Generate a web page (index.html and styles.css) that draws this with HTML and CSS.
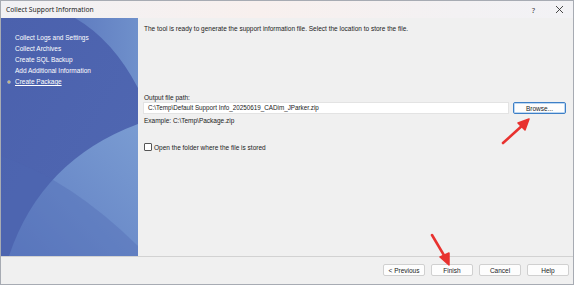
FILE: index.html
```html
<!DOCTYPE html>
<html>
<head>
<meta charset="utf-8">
<link rel="stylesheet" href="styles.css">
</head>
<body>
<div class="window">
  <div class="titlebar">
    <span class="title">Collect Support Information</span>
    <span class="tb-help">?</span>
    <span class="tb-close">
      <svg width="9" height="9" viewBox="0 0 9 9"><path d="M1 1L8 8M8 1L1 8" stroke="#333" stroke-width="0.9" fill="none"/></svg>
    </span>
  </div>
  <div class="main">
    <div class="sidebar">
      <svg class="sidebar-bg" width="137" height="238" viewBox="0 0 137 238" preserveAspectRatio="none">
        <defs>
          <linearGradient id="g1" x1="0" y1="0" x2="1" y2="1">
            <stop offset="0" stop-color="#4b61ad"/>
            <stop offset="1" stop-color="#5068b2"/>
          </linearGradient>
          <linearGradient id="g2" x1="0" y1="1" x2="1" y2="0">
            <stop offset="0" stop-color="#5f7dc2"/>
            <stop offset="1" stop-color="#7a9cd2"/>
          </linearGradient>
          <linearGradient id="g3" x1="0" y1="0" x2="1" y2="0">
            <stop offset="0" stop-color="#5f7cc0"/>
            <stop offset="1" stop-color="#6f90cb"/>
          </linearGradient>
        </defs>
        <rect width="137" height="238" fill="url(#g1)"/>
        <path d="M74 0 Q112 22 137 70 L137 0 Z" fill="url(#g3)"/>
        <path d="M8 238 Q40 142 137 106 L137 238 Z" fill="url(#g2)"/>
        <path d="M0 138 Q70 162 137 228 L137 238 L0 238 Z" fill="#4c66b2" opacity="0.35"/>
      </svg>
      <ul class="steps">
        <li>Collect Logs and Settings</li>
        <li>Collect Archives</li>
        <li>Create SQL Backup</li>
        <li>Add Additional Information</li>
        <li class="current"><span class="bullet"></span>Create Package</li>
      </ul>
    </div>
    <div class="content">
      <p class="intro">The tool is ready to generate the support information file. Select the location to store the file.</p>
      <div class="field">
        <label class="label">Output file path:</label>
        <div class="path-row">
          <div class="input">C:\Temp\Default Support Info_20250619_CADim_JParker.zip</div>
          <button class="btn browse">Browse...</button>
        </div>
        <div class="example">Example: C:\Temp\Package.zip</div>
      </div>
      <div class="check-row">
        <span class="checkbox"></span>
        <span>Open the folder where the file is stored</span>
      </div>
    </div>
  </div>
  <div class="footer">
    <button class="btn">&lt; Previous</button>
    <button class="btn">Finish</button>
    <button class="btn">Cancel</button>
    <button class="btn">Help</button>
  </div>
  <svg class="arrow arrow-browse" width="40" height="40" viewBox="0 0 40 40">
    <path d="M5 34 L26 15" stroke="#e8322f" stroke-width="2.6" stroke-linecap="round"/>
    <path d="M31 10 L20 14 L27 21 Z" fill="#e8322f" stroke="#e8322f" stroke-width="1.5" stroke-linejoin="round"/>
  </svg>
  <svg class="arrow arrow-finish" width="34" height="40" viewBox="0 0 34 40">
    <path d="M5 4 L18 26" stroke="#e8322f" stroke-width="2.6" stroke-linecap="round"/>
    <path d="M22 34 L13 26 L22 22 Z" fill="#e8322f" stroke="#e8322f" stroke-width="1.5" stroke-linejoin="round"/>
  </svg>
</div>
</body>
</html>
```

FILE: styles.css
```css
* { box-sizing: border-box; }
html, body { margin: 0; padding: 0; background: #ffffff; }
body { width: 576px; height: 286px; overflow: hidden; }

.window {
  position: relative;
  width: 574px;
  height: 285px;
  border: 1px solid #a7abb3;
  background: #f0f0f0;
  display: flex;
  flex-direction: column;
  font-family: "Liberation Sans", Arial, sans-serif;
  color: #1a1a1a;
}

.titlebar {
  height: 17px;
  display: flex;
  align-items: center;
  padding-left: 5px;
  background: linear-gradient(to right, #f1f1f4 0%, #f8f0ee 45%, #f3f1f3 80%, #f2f2f5 100%);
}
.title { font-family: "Noto Sans", "Open Sans", sans-serif; font-size: 6.7px; font-weight: 400; color: #222; flex: 1; }
.tb-help { font-family: "Noto Sans", sans-serif; font-size: 7.5px; color: #333; width: 27px; text-align: center; }
.tb-close { width: 26px; display: flex; justify-content: center; padding-right: 2px; }

.main { display: flex; height: 238px; }

.sidebar {
  position: relative;
  width: 137px;
  overflow: hidden;
}
.sidebar-bg { position: absolute; left: 0; top: 0; }
.steps {
  position: relative;
  list-style: none;
  margin: 0;
  padding: 14px 0 0 14px;
  font-size: 6.5px;
  color: #ffffff;
}
.steps li { height: 11px; line-height: 11px; }
.steps .current { text-decoration: underline; position: relative; }
.bullet {
  position: absolute;
  left: -8px;
  top: 4px;
  width: 4px;
  height: 4px;
  border-radius: 50%;
  background: #d9c56a;
  border: 1px solid #8c9bc9;
}

.content {
  flex: 1;
  padding: 6px 6px 0 6px;
  font-size: 6.5px;
  color: #1a1a1a;
}
.intro { margin: 0; line-height: 10px; }
.field { margin-top: 59px; }
.label { display: block; line-height: 9px; }
.path-row { display: flex; gap: 4px; align-items: center; margin-left: -1px; }
.input {
  width: 366px;
  height: 12px;
  background: #ffffff;
  border: 1px solid #e3e3e3;
  padding-left: 4px;
  line-height: 10px;
  font-size: 6.3px;
}
.example { margin-top: 2px; line-height: 9px; }

.check-row { display: flex; align-items: center; gap: 2px; margin-top: 18px; }
.checkbox {
  width: 8px; height: 8px;
  border: 1px solid #555;
  border-radius: 1px;
  background: #fff;
}

.btn {
  font-family: "Liberation Sans", Arial, sans-serif;
  font-size: 6.5px;
  color: #1a1a1a;
  width: 42px;
  height: 12px;
  padding: 0;
  background: #fdfdfd;
  border: 1px solid #d0d0d0;
  border-radius: 2px;
}
.btn.browse { width: 53px; border: 1px solid #3d7fc6; box-shadow: inset 0 0 0 1px #bcd7f2; }

.footer {
  flex: 1;
  border-top: 1px solid #d2d2d2;
  display: flex;
  justify-content: flex-end;
  align-items: center;
  gap: 6px;
  padding: 0 4px 1px 0;
}

.arrow { position: absolute; }
.arrow-browse { left: 497px; top: 108px; }
.arrow-finish { left: 426px; top: 230px; }
```
